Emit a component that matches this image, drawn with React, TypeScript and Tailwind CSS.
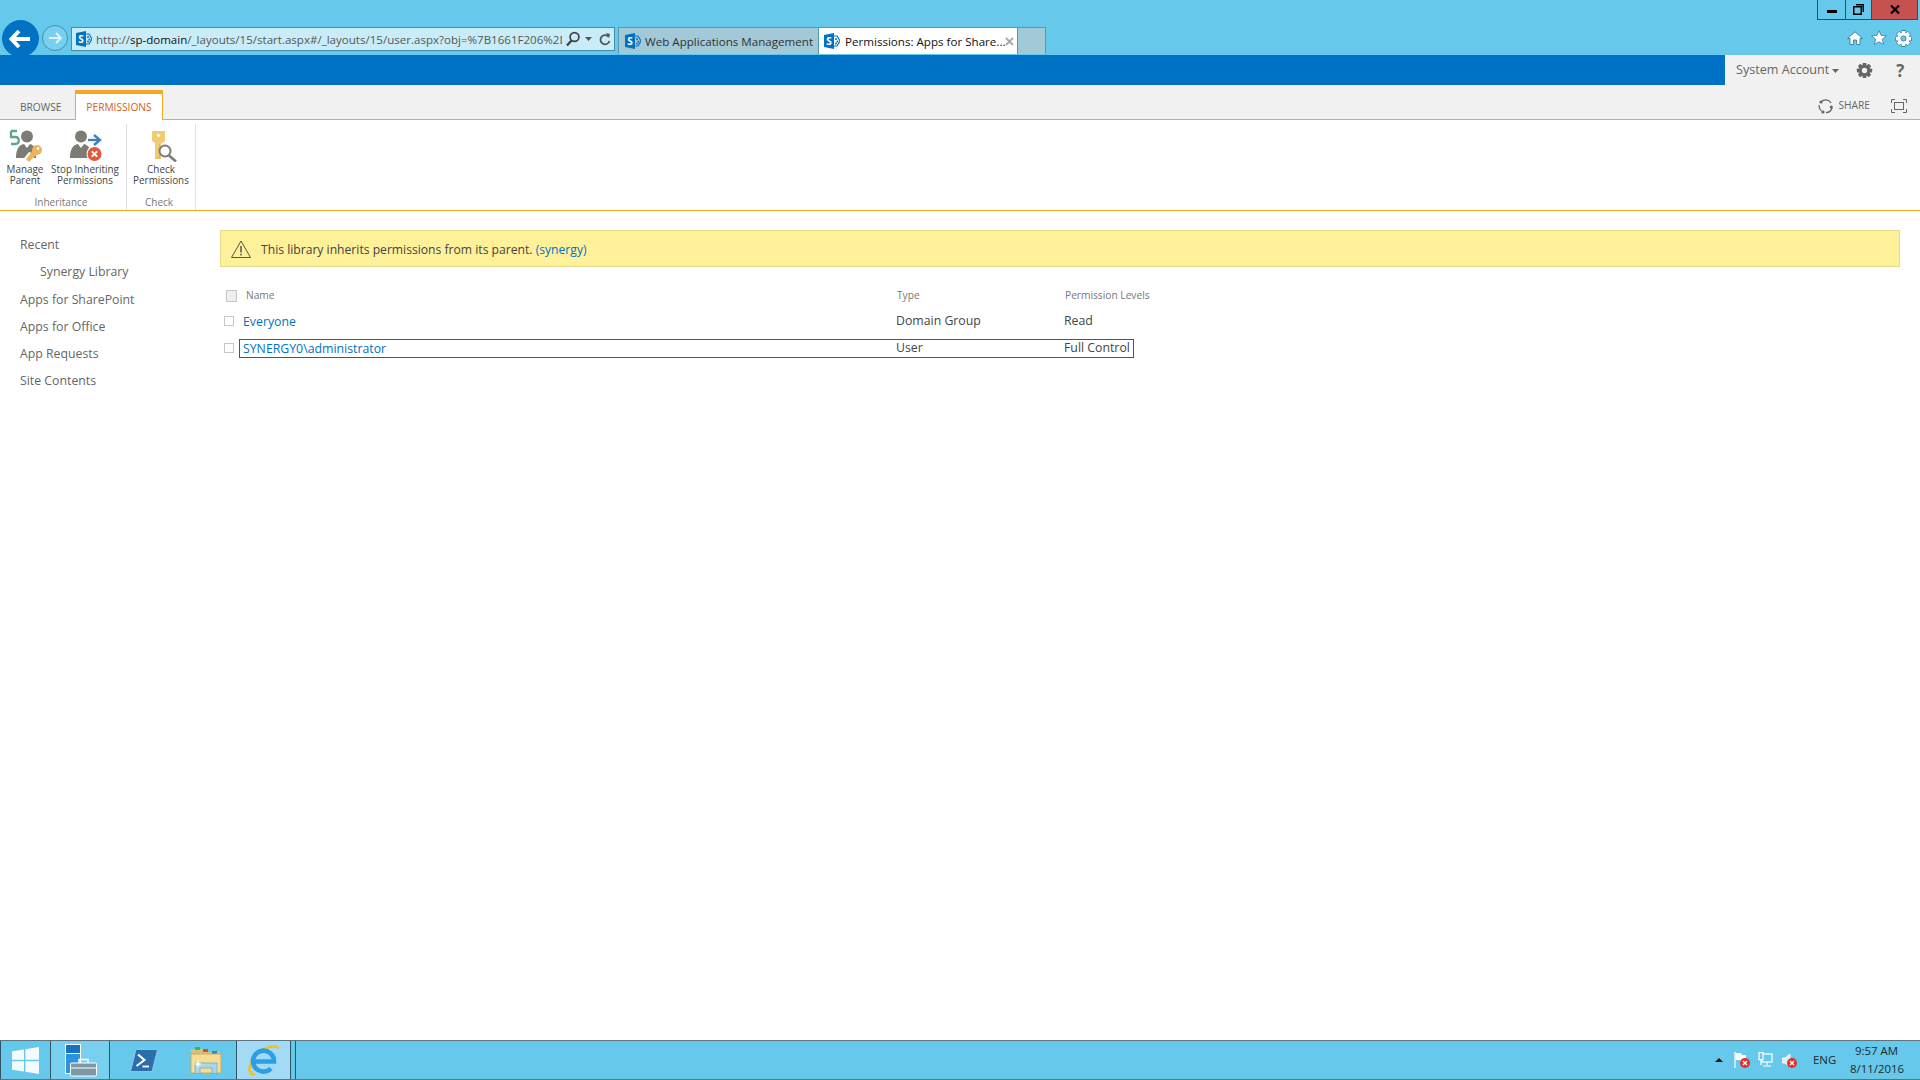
import React from "react";

const SP = () => (
  <svg width="16" height="16" viewBox="0 0 16 16" className="shrink-0">
    <path d="M9 3 L13 3 L16 8 L13 13 L9 13 Z" fill="none" stroke="#0072c6" strokeWidth="1.2" />
    <circle cx="12" cy="6" r="1" fill="#0072c6" />
    <circle cx="13.4" cy="8.4" r="1" fill="#0072c6" />
    <circle cx="12" cy="10.6" r="1" fill="#0072c6" />
    <path d="M0 2 L10 0 V16 L0 14 Z" fill="#0072c6" />
    <text x="5" y="12" textAnchor="middle" fontSize="10" fontWeight="700" fill="#fff" fontFamily="Open Sans">S</text>
  </svg>
);

const Person = ({ x = 0 }: { x?: number }) => (
  <g transform={`translate(${x} 0)`} fill="#7d7c74">
    <circle cx="17" cy="7.5" r="6" />
    <path d="M6 29 C6 20 9 16 14 15 L17 19 L20 15 C22 15.5 24 16.5 26 20 L26 29 Z" />
  </g>
);

const ManageIcon = () => (
  <svg width="33" height="33" viewBox="0 0 33 33">
    <Person x={1} />
    <path d="M2 2 H8 M2 2 V8 H6 C11 8 11 15 6 15 H2" fill="none" stroke="#5aa58e" strokeWidth="2.3" />
    <path d="M18 31 L23 25" stroke="#fff" strokeWidth="7" />
    <g fill="#eeb35e">
      <circle cx="28" cy="21" r="5" />
      <path d="M24 21 L28 25 L20 33 L17 30 Z" />
    </g>
    <circle cx="29" cy="19.5" r="1.2" fill="#fff" />
  </svg>
);

const StopIcon = () => (
  <svg width="33" height="33" viewBox="0 0 33 33">
    <Person x={-5} />
    <path d="M19 11 H29" stroke="#3d7fb8" strokeWidth="2.4" />
    <path d="M25 6 L31 11 L25 16" fill="none" stroke="#3d7fb8" strokeWidth="2.4" />
    <circle cx="25.5" cy="25" r="8" fill="#fff" />
    <circle cx="25.5" cy="25" r="7" fill="#e2583e" />
    <path d="M22.8 22.3 L28.2 27.7 M28.2 22.3 L22.8 27.7" stroke="#fff" strokeWidth="1.9" />
  </svg>
);

const CheckIcon = () => (
  <svg width="28" height="33" viewBox="0 0 28 33">
    <path d="M2 2 H15 V12 L11 15 V30 H5 V14 L2 12 Z" fill="#f0cd75" />
    <path d="M9.5 15 V29 H5.5" fill="none" stroke="#e9b24c" strokeWidth="1.2" />
    <circle cx="8.5" cy="6.5" r="1.4" fill="#fff" />
    <circle cx="15" cy="22" r="5.5" fill="#fff" stroke="#7d7c74" strokeWidth="2" />
    <path d="M19 26.5 L26 32.5" stroke="#7d7c74" strokeWidth="2.6" />
  </svg>
);

const Home = () => (
  <svg width="16" height="14" viewBox="0 0 16 14">
    <path d="M8 0.8 L15.4 7.5 H13 V13.5 H9.6 V9 H6.4 V13.5 H3 V7.5 H0.6 Z" fill="#fff" stroke="#2f7f9d" strokeWidth="0.9" strokeLinejoin="round" />
  </svg>
);
const Star = () => (
  <svg width="16" height="15" viewBox="0 0 16 15">
    <path d="M8 0.6 L10 5.3 L15.4 5.8 L11.3 9.3 L12.6 14.4 L8 11.8 L3.4 14.4 L4.7 9.3 L0.6 5.8 L6 5.3 Z" fill="#fff" stroke="#2f7f9d" strokeWidth="0.8" />
  </svg>
);
const teeth = [0, 45, 90, 135, 180, 225, 270, 315];
const Gear = ({ fill, hole, size, outline }: { fill: string; hole: string; size: number; outline?: string }) => (
  <svg width={size} height={size} viewBox="-1 -1 18 18">
    {outline && (
      <g fill={outline} stroke={outline} strokeWidth="1.4">
        {teeth.map((a) => (
          <rect key={a} x="6.2" y="0" width="3.6" height="16" rx="0.6" transform={`rotate(${a} 8 8)`} />
        ))}
        <circle cx="8" cy="8" r="6" />
      </g>
    )}
    <g fill={fill}>
      {teeth.map((a) => (
        <rect key={a} x="6.2" y="0" width="3.6" height="16" rx="0.6" transform={`rotate(${a} 8 8)`} />
      ))}
      <circle cx="8" cy="8" r="6" />
    </g>
    <circle cx="8" cy="8" r="2.8" fill={hole} stroke={outline} strokeWidth={outline ? 0.8 : 0} />
  </svg>
);

const Box = ({ className = "" }: { className?: string }) => (
  <div className={`border border-[#c6c6c6] shrink-0 ${className}`} />
);

const RedX = () => (
  <svg width="10" height="10" viewBox="0 0 10 10" className="absolute right-0 bottom-0">
    <circle cx="5" cy="5" r="5" fill="#e2302c" />
    <path d="M3 3 L7 7 M7 3 L3 7" stroke="#fff" strokeWidth="1.3" />
  </svg>
);

const Ribbon = ({ children, className }: { children: React.ReactNode; className: string }) => (
  <div className={`flex flex-col items-center pt-[5px] ${className}`}>
    {children}
  </div>
);

const rows = [
  { name: "Everyone", type: "Domain Group", level: "Read", boxed: false },
  { name: "SYNERGY0\\administrator", type: "User", level: "Full Control", boxed: true },
];

export default function App() {
  return (
    <div className="flex h-[1080px] w-[1920px] flex-col overflow-hidden bg-white font-['Open_Sans',sans-serif] text-[#444]">
      {/* IE chrome */}
      <div className="flex h-[55px] shrink-0 flex-col overflow-hidden bg-[#66c9eb]">
        <div className="flex h-[27px] shrink-0 justify-end pr-[2px]">
          <div className="flex h-[20px] w-[101px] border-x border-b border-[#2f4f5c]">
            <div className="flex w-[28px] items-end justify-center border-r border-[#2f4f5c] pb-[6px]">
              <div className="h-[3px] w-[10px] bg-black" />
            </div>
            <div className="flex w-[26px] items-center justify-center border-r border-[#2f4f5c]">
              <svg width="11" height="11" viewBox="0 0 11 11">
                <rect x="0.75" y="2.75" width="7.5" height="7.5" fill="none" stroke="#000" strokeWidth="1.5" />
                <path d="M3 0.75 H10.25 V8" fill="none" stroke="#000" strokeWidth="1.5" />
              </svg>
            </div>
            <div className="flex flex-1 items-center justify-center bg-[#c75050]">
              <svg width="10" height="9" viewBox="0 0 10 9">
                <path d="M1 0.5 L9 8.5 M9 0.5 L1 8.5" stroke="#000" strokeWidth="2.2" />
              </svg>
            </div>
          </div>
        </div>
        <div className="flex h-[28px] shrink-0 items-start">
          <div className="ml-[2px] mt-[-7px] flex h-[37px] w-[37px] shrink-0 items-center justify-center rounded-full bg-[#0072c6]">
            <svg width="22" height="20" viewBox="0 0 22 20" className="ml-[-2px]">
              <path d="M10 2 L2.5 10 L10 18 M3 10 H21" fill="none" stroke="#fff" strokeWidth="4" />
            </svg>
          </div>
          <div className="ml-[3px] mt-[-2px] flex h-[26px] w-[26px] shrink-0 items-center justify-center rounded-full border border-[#3f93b3] bg-[#78d0ee]">
            <svg width="14" height="12" viewBox="0 0 14 12">
              <path d="M8 1 L13 6 L8 11 M13 6 H1" fill="none" stroke="#dff4fb" strokeWidth="1.8" />
            </svg>
          </div>
          <div className="ml-[3px] flex h-[24px] w-[544px] shrink-0 items-center border border-[#468ca6] bg-[#c8edf9] pl-[4px] pr-[5px]">
            <SP />
            <div className="ml-[4px] w-[466px] shrink-0 overflow-hidden whitespace-nowrap pt-[2px] text-[11.55px] text-[#555]">
              http://<span className="text-[#111]">sp-domain</span>/_layouts/15/start.aspx#/_layouts/15/user.aspx?obj=%7B1661F206%2DE
            </div>
            <svg width="16" height="16" viewBox="0 0 16 16" className="ml-[3px] shrink-0">
              <circle cx="9.5" cy="6" r="4.4" fill="none" stroke="#444" strokeWidth="1.8" />
              <path d="M6.5 9.5 L2 14.5" stroke="#444" strokeWidth="2.4" />
            </svg>
            <svg width="7" height="4" viewBox="0 0 7 4" className="ml-[4px] shrink-0">
              <path d="M0 0 H7 L3.5 4 Z" fill="#555" />
            </svg>
            <svg width="12" height="13" viewBox="0 0 12 13" className="ml-[7px] shrink-0">
              <path d="M9.8 4 A4.6 4.6 0 1 0 10.5 8" fill="none" stroke="#555" strokeWidth="1.8" />
              <path d="M7 0 L11 1 L10 5 Z" fill="#555" />
            </svg>
          </div>
          <div className="ml-[3px] flex h-[27px] shrink-0 border border-b-0 border-[#4f9ab5]">
            <div className="flex w-[199px] items-center bg-[#a2c9d8] pl-[6px] text-[11.6px] text-[#333]">
              <SP />
              <span className="ml-[4px] whitespace-nowrap pt-[2px]">Web Applications Management</span>
            </div>
            <div className="flex w-[200px] items-center border-x border-[#4f9ab5] bg-white pl-[5px] text-[11.6px] text-[#111]">
              <SP />
              <span className="ml-[5px] w-[156px] whitespace-nowrap pt-[2px]">Permissions: Apps for Share...</span>
              <svg width="9" height="9" viewBox="0 0 9 9" className="ml-[4px]">
                <path d="M1 1 L8 8 M8 1 L1 8" stroke="#a8a8a8" strokeWidth="1.8" />
              </svg>
            </div>
            <div className="w-[27px] bg-[#a2c9d8]" />
          </div>
          <div className="flex flex-1 items-start justify-end pr-[8px] pt-[4px]">
            <Home />
            <div className="ml-[8px] mt-[-1px]">
              <Star />
            </div>
            <div className="ml-[8px] mt-[-1px]">
              <Gear fill="#fff" hole="#66c9eb" size={17} outline="#2f7f9d" />
            </div>
          </div>
        </div>
      </div>

      {/* SharePoint suite bar */}
      <div className="flex h-[30px] shrink-0 bg-[#f1f1f1]">
        <div className="w-[1725px] bg-[#0072c6]" />
        <div className="flex flex-1 items-center pl-[11px] text-[#666]">
          <span className="whitespace-nowrap pt-[1px] text-[12.6px]">System Account</span>
          <svg width="7" height="4" viewBox="0 0 7 4" className="ml-[3px] mt-[2px]">
            <path d="M0 0 H7 L3.5 4 Z" fill="#666" />
          </svg>
          <div className="ml-[17px]">
            <Gear fill="#666" hole="#f1f1f1" size={17} />
          </div>
          <span className="ml-[23px] text-[17px] font-bold leading-none">?</span>
        </div>
      </div>

      {/* Ribbon tabs */}
      <div className="flex h-[35px] shrink-0 border-b border-[#f5a623] bg-[#f1f1f1]">
        <div className="flex w-[75px] items-center pl-[20px] pt-[11px] text-[10.2px] text-[#666]">BROWSE</div>
        <div className="mb-[-1px] mt-[5px] flex w-[88px] items-center justify-center border-x border-t-[4px] border-[#f5a623] bg-white pt-[2px] text-[10.2px] text-[#d2601a]">
          PERMISSIONS
        </div>
        <div className="flex flex-1 items-center justify-end pr-[13px] pt-[8px] text-[10.2px] text-[#666]">
          <svg width="15" height="15" viewBox="0 0 15 15">
            <path d="M3 3 A6.2 6.2 0 0 1 13 4 M14 9 A6.2 6.2 0 0 1 8 13.6 M3.6 12 A6.2 6.2 0 0 1 1.2 6" fill="none" stroke="#666" strokeWidth="1.3" />
            <circle cx="3" cy="3" r="1.6" fill="#666" />
            <circle cx="13.3" cy="8" r="1.6" fill="#666" />
            <circle cx="5" cy="13" r="1.6" fill="#666" />
          </svg>
          <span className="ml-[6px]">SHARE</span>
          <svg width="16" height="14" viewBox="0 0 16 14" className="ml-[21px]">
            <path d="M0.5 4 V0.5 H4 M12 0.5 H15.5 V4 M15.5 10 V13.5 H12 M4 13.5 H0.5 V10" fill="none" stroke="#666" />
            <rect x="3.5" y="3.5" width="9" height="7" fill="none" stroke="#666" />
          </svg>
        </div>
      </div>

      {/* Ribbon */}
      <div className="flex h-[91px] shrink-0 border-b border-[#f5a623] bg-white pt-[4px] text-[9.9px] leading-[11px] text-[#444]">
        <div className="flex w-[127px] flex-col border-r border-[#e1e1e1]">
          <div className="flex flex-1">
            <Ribbon className="w-[50px]">
              <ManageIcon />
              <div className="mt-[2px] text-center">Manage<br />Parent</div>
            </Ribbon>
            <Ribbon className="w-[70px]">
              <StopIcon />
              <div className="mt-[2px] whitespace-nowrap text-center">Stop Inheriting<br />Permissions</div>
            </Ribbon>
          </div>
          <div className="h-[13px] pr-[4px] text-center text-[10px] text-[#777]">Inheritance</div>
        </div>
        <div className="flex w-[69px] flex-col border-r border-[#e1e1e1]">
          <Ribbon className="flex-1">
            <div className="ml-[6px] h-[33px]">
              <CheckIcon />
            </div>
            <div className="mt-[2px] text-center">Check<br />Permissions</div>
          </Ribbon>
          <div className="h-[13px] pr-[4px] text-center text-[10px] text-[#777]">Check</div>
        </div>
      </div>

      {/* Body */}
      <div className="flex flex-1">
        <nav className="flex w-[220px] shrink-0 flex-col pl-[20px] pt-[21px] text-[12.3px] text-[#666]">
          <div className="flex h-[27px] items-center">Recent</div>
          <div className="flex h-[27px] items-center pl-[20px]">Synergy Library</div>
          <div className="flex h-[28px] items-center">Apps for SharePoint</div>
          <div className="flex h-[27px] items-center">Apps for Office</div>
          <div className="flex h-[27px] items-center">App Requests</div>
          <div className="flex h-[27px] items-center">Site Contents</div>
        </nav>
        <main className="flex-1 pr-[20px] pt-[19px]">
          <div className="flex h-[37px] items-center border border-[#e5dc8b] bg-[#fff199] pl-[10px] text-[12.15px] text-[#444]">
            <svg width="20" height="18" viewBox="0 0 20 18" className="shrink-0">
              <path d="M10 1 L19.5 17.5 H0.5 Z" fill="none" stroke="#555" strokeWidth="1" />
              <path d="M10 6 V12.5 M10 13.8 V15.4" stroke="#555" strokeWidth="1.5" />
            </svg>
            <span className="ml-[10px] mt-[3px]">
              This library inherits permissions from its parent. <span className="text-[#0072c6]">(synergy)</span>
            </span>
          </div>

          <div className="mt-[22px] flex h-[14px] items-center text-[10.2px] text-[#777]">
            <Box className="ml-[6px] h-[12px] w-[11px] bg-[#eeeeee]" />
            <div className="ml-[9px] w-[651px]">Name</div>
            <div className="w-[168px]">Type</div>
            <div>Permission Levels</div>
          </div>

          <div className="mt-[9px] flex flex-col gap-[8px] text-[12.3px]">
            {rows.map((r) => (
              <div key={r.name} className="flex items-center">
                <Box className="ml-[4px] mb-[1px] h-[10px] w-[10px] bg-white" />
                <div
                  className={`ml-[5px] flex h-[19px] w-[895px] items-center border pl-[3px] ${
                    r.boxed ? "border-[#e8112d]" : "border-transparent"
                  }`}
                >
                  <span className="w-[653px] pt-[1px] text-[#0072c6]">{r.name}</span>
                  <span className="w-[168px]">{r.type}</span>
                  <span>{r.level}</span>
                </div>
              </div>
            ))}
          </div>
        </main>
      </div>

      {/* Taskbar */}
      <div className="flex h-[40px] shrink-0 items-stretch border-y border-[#5b7480] bg-[#66c9eb] text-[#1c2a30]">
        <div className="flex w-[51px] items-center justify-center border-x border-[#2f5666]">
          <svg width="27" height="27" viewBox="0 0 27 27">
            <path d="M0 4.2 L12 2.4 V12.8 H0 Z M13.4 2.2 L27 0 V12.8 H13.4 Z M0 14.2 H12 V24.6 L0 22.8 Z M13.4 14.2 H27 V27 L13.4 24.8 Z" fill="#fff" opacity="0.92" />
          </svg>
        </div>
        <div className="flex w-[59px] items-center justify-center border-r border-[#2f5666] bg-[#78d0ee]">
          <svg width="33" height="33" viewBox="0 0 33 33">
            <rect x="1.5" y="0.5" width="15" height="29" fill="#2b93e0" stroke="#fff" />
            <rect x="2" y="1" width="14" height="8" fill="#1872c4" />
            <path d="M2 9.5 H16" stroke="#fff" />
            <path d="M15 19 V15.5 H24 V19" fill="none" stroke="#fff" strokeWidth="1.4" />
            <rect x="6.5" y="19" width="26" height="13" rx="1" fill="#7f97a5" stroke="#fff" />
            <path d="M7 24 H32" stroke="#fff" />
          </svg>
        </div>
        <div className="flex w-[66px] items-center justify-center pl-[2px]">
          <svg width="28" height="23" viewBox="0 0 28 23">
            <path d="M6 0.5 H27.5 L22 22.5 H0.5 Z" fill="#2a6eab" stroke="#8fc0de" strokeLinejoin="round" />
            <path d="M8 5.5 L14.5 11 L6.5 17" fill="none" stroke="#fff" strokeWidth="2" />
            <path d="M12.5 17.5 H19" stroke="#fff" strokeWidth="1.8" />
          </svg>
        </div>
        <div className="flex w-[61px] items-center justify-center border-r border-[#2f5666]">
          <svg width="32" height="28" viewBox="0 0 32 28">
            <path d="M1 3 H13 L15 6 H30 V8 H1 Z" fill="#d9c07a" />
            <rect x="5" y="1" width="5" height="3" fill="#4cb04a" />
            <rect x="13" y="3" width="5" height="3" fill="#d94c2c" />
            <rect x="22" y="5" width="5" height="3" fill="#2d86d0" />
            <path d="M1 8 H31 V27 H1 Z" fill="#f6dd96" stroke="#c9ab60" />
            <path d="M5 27.5 V17 H27 V27.5 H22 V22 H10 V27.5 Z" fill="#a8d6ea" stroke="#6ba3bf" strokeWidth="0.7" />
            <path d="M8 14 L9 17 L12 18 L9 19 L8 22 L7 19 L4 18 L7 17 Z" fill="#fff" />
          </svg>
        </div>
        <div className="flex w-[54px] items-center justify-center border-r border-[#2f5666] bg-[#a3dbf6]">
          <svg width="32" height="31" viewBox="0 0 32 31">
            <path d="M31 3 C24 -1 10 4 3 18 C0 25 2 30 7 29.5" fill="none" stroke="#f2bf2a" strokeWidth="2.6" />
            <path d="M6.5 16.5 H26 A10.5 10.5 0 1 0 23 23.5" fill="none" stroke="#2b9fe6" strokeWidth="4.6" />
          </svg>
        </div>
        <div className="w-[5px] border-r border-[#2f5666]" />
        <div className="flex flex-1 items-center justify-end">
          <svg width="8" height="4" viewBox="0 0 8 4" className="mr-[11px]">
            <path d="M4 0 L8 4 H0 Z" fill="#111" />
          </svg>
          <div className="relative mr-[8px] h-[16px] w-[16px]">
            <svg width="13" height="16" viewBox="0 0 13 16">
              <path d="M1 0 V16" stroke="#fff" strokeWidth="1.2" />
              <path d="M1.5 1 H7 L8 3 H12 V10 H7 L6 8 H1.5 Z" fill="#fff" />
            </svg>
            <RedX />
          </div>
          <div className="relative mr-[9px] h-[16px] w-[15px]">
            <svg width="15" height="16" viewBox="0 0 15 16">
              <rect x="4" y="2" width="10" height="8" fill="none" stroke="#fff" strokeWidth="1.2" />
              <rect x="1" y="0.6" width="4" height="7" fill="#66c9eb" stroke="#fff" strokeWidth="1.2" />
              <path d="M3 8 V13 M9 10 V13 M5 14 H13" stroke="#fff" strokeWidth="1.2" />
            </svg>
          </div>
          <div className="relative h-[16px] w-[15px]">
            <svg width="11" height="15" viewBox="0 0 11 15" className="mt-[1px]">
              <path d="M0.5 5 H3 L8 1 V14 L3 10 H0.5 Z" fill="#dfeef4" stroke="#fff" strokeWidth="0.8" />
            </svg>
            <RedX />
          </div>
          <span className="ml-[16px] w-[22px] text-[11.4px]">ENG</span>
          <div className="ml-[15px] mr-[17px] w-[53px] whitespace-nowrap text-center text-[11.4px] leading-[18px]">
            9:57 AM
            <br />
            8/11/2016
          </div>
        </div>
      </div>
    </div>
  );
}
